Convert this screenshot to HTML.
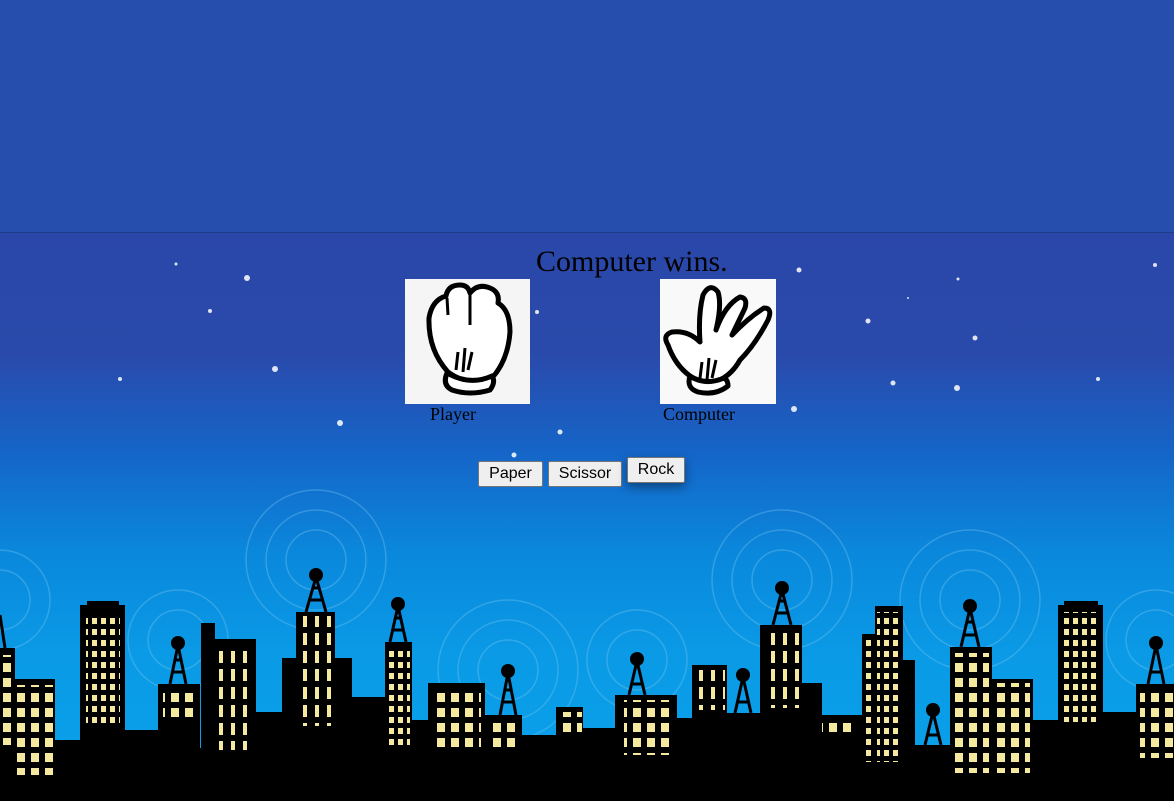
<!DOCTYPE html>
<html><head><style>
html,body{margin:0;padding:0;width:1174px;height:801px;overflow:hidden;font-family:"Liberation Serif",serif}
body{position:relative;background:#264ead}
#bg{position:absolute;left:0;top:232px;width:1174px;height:569px;background:linear-gradient(#2a47a9 0px,#2a4aab 120px,#1565c8 220px,#0a88dc 320px,#0a9ae6 420px,#0aa2ea 569px);border-top:1px solid #1f3c8a}
.t{position:absolute;color:#000}
button{position:absolute;font:16px "Liberation Sans",sans-serif;background:#efefef;border:1px solid #767676;border-radius:2px;padding:0;height:26px}
</style></head><body>
<div id="bg"></div>
<svg style="position:absolute;left:0;top:0" width="1174" height="801">
<defs>
<pattern id="w" width="9" height="11" patternUnits="userSpaceOnUse"><rect x="2" y="2" width="5" height="6" fill="#f5e9a0"/></pattern>
<pattern id="w2" width="14" height="15" patternUnits="userSpaceOnUse"><rect x="3" y="3" width="8" height="9" fill="#f5e9a0"/></pattern>
<pattern id="w3" width="12" height="18" patternUnits="userSpaceOnUse"><rect x="3" y="3" width="4" height="12" fill="#f5e9a0"/></pattern>
</defs>
<g fill="none" stroke="#7cc8f0" stroke-opacity=".35" stroke-width="1.5">
<circle cx="316" cy="560" r="30"/><circle cx="316" cy="560" r="50"/><circle cx="316" cy="560" r="70"/>
<circle cx="782" cy="580" r="30"/><circle cx="782" cy="580" r="50"/><circle cx="782" cy="580" r="70"/>
<circle cx="970" cy="600" r="30"/><circle cx="970" cy="600" r="50"/><circle cx="970" cy="600" r="70"/>
<circle cx="178" cy="640" r="30"/><circle cx="178" cy="640" r="50"/>
<circle cx="508" cy="670" r="30"/><circle cx="508" cy="670" r="50"/><circle cx="508" cy="670" r="70"/>
<circle cx="0" cy="600" r="30"/><circle cx="0" cy="600" r="50"/>
<circle cx="1156" cy="640" r="30"/><circle cx="1156" cy="640" r="50"/>
<circle cx="637" cy="660" r="30"/><circle cx="637" cy="660" r="50"/>
</g>
<g fill="#fff" opacity=".85">
<circle cx="247" cy="278" r="3"/><circle cx="176" cy="264" r="1.5"/><circle cx="210" cy="311" r="2"/><circle cx="275" cy="369" r="3"/><circle cx="120" cy="379" r="2"/><circle cx="340" cy="423" r="3"/><circle cx="560" cy="432" r="2.5"/><circle cx="514" cy="455" r="2.5"/><circle cx="537" cy="312" r="2"/><circle cx="799" cy="270" r="2.5"/><circle cx="868" cy="321" r="2.5"/><circle cx="958" cy="279" r="1.5"/><circle cx="975" cy="338" r="2.5"/><circle cx="893" cy="383" r="2.5"/><circle cx="957" cy="388" r="3"/><circle cx="1098" cy="379" r="2"/><circle cx="1155" cy="265" r="2"/><circle cx="794" cy="409" r="3"/><circle cx="908" cy="298" r="1"/>
</g>
<g fill="#000">
<rect x="0" y="748" width="1174" height="53"/>
<rect x="0" y="648" width="15" height="110"/><rect x="15" y="679" width="40" height="80"/>
<rect x="55" y="740" width="30" height="20"/>
<rect x="80" y="605" width="45" height="150"/><rect x="87" y="601" width="32" height="6"/>
<rect x="125" y="730" width="35" height="30"/>
<rect x="158" y="684" width="42" height="70"/><rect x="201" y="623" width="14" height="130"/><rect x="215" y="639" width="41" height="115"/>
<rect x="256" y="712" width="30" height="40"/>
<rect x="282" y="658" width="70" height="95"/><rect x="296" y="612" width="39" height="140"/>
<rect x="352" y="697" width="33" height="55"/><rect x="385" y="642" width="27" height="110"/>
<rect x="412" y="720" width="16" height="35"/><rect x="428" y="683" width="57" height="70"/><rect x="485" y="715" width="37" height="40"/>
<rect x="522" y="735" width="34" height="20"/><rect x="556" y="707" width="27" height="45"/><rect x="583" y="728" width="32" height="25"/>
<rect x="615" y="695" width="62" height="60"/><rect x="677" y="718" width="15" height="35"/><rect x="692" y="665" width="35" height="90"/>
<rect x="727" y="713" width="33" height="40"/><rect x="760" y="625" width="42" height="130"/><rect x="802" y="683" width="20" height="70"/>
<rect x="822" y="715" width="40" height="40"/><rect x="862" y="634" width="13" height="120"/><rect x="875" y="606" width="28" height="150"/><rect x="903" y="660" width="12" height="95"/>
<rect x="915" y="745" width="35" height="10"/><rect x="950" y="647" width="42" height="110"/><rect x="992" y="679" width="41" height="80"/>
<rect x="1033" y="720" width="25" height="35"/><rect x="1058" y="605" width="45" height="150"/><rect x="1064" y="601" width="34" height="6"/><rect x="1103" y="712" width="33" height="45"/><rect x="1136" y="684" width="38" height="70"/>
<g stroke="#000" stroke-width="3">
<path d="M316 577 L306 612 M316 577 L326 612 M309 600 H323 M312 588 H320"/>
<path d="M398 606 L390 642 M398 606 L406 642 M392 630 H404 M395 618 H401"/>
<path d="M178 645 L170 684 M178 645 L186 684 M172 672 H184 M175 660 H181"/>
<path d="M508 673 L500 715 M508 673 L516 715 M502 702 H514 M505 690 H511"/>
<path d="M637 661 L629 695 M637 661 L645 695 M631 684 H643"/>
<path d="M743 677 L735 713 M743 677 L751 713 M737 702 H749"/>
<path d="M782 590 L773 625 M782 590 L791 625 M775 613 H789 M779 601 H785"/>
<path d="M970 608 L961 647 M970 608 L979 647 M963 635 H977 M967 622 H973"/>
<path d="M933 712 L925 745 M933 712 L941 745 M927 735 H939"/>
<path d="M1156 645 L1148 684 M1156 645 L1164 684 M1150 672 H1162"/>
<path d="M0 615 L5 648"/>
</g>
<circle cx="316" cy="575" r="7"/><circle cx="398" cy="604" r="7"/><circle cx="178" cy="643" r="7"/><circle cx="508" cy="671" r="7"/><circle cx="637" cy="659" r="7"/><circle cx="743" cy="675" r="7"/><circle cx="782" cy="588" r="7"/><circle cx="970" cy="606" r="7"/><circle cx="933" cy="710" r="7"/><circle cx="1156" cy="643" r="7"/>
</g>
<rect x="0" y="655" width="15" height="90" fill="url(#w2)"/>
<rect x="17" y="685" width="38" height="90" fill="url(#w2)"/>
<rect x="86" y="614" width="34" height="110" fill="url(#w)"/>
<rect x="163" y="688" width="30" height="30" fill="url(#w2)"/>
<rect x="212" y="645" width="40" height="105" fill="url(#w3)"/>
<rect x="302" y="616" width="30" height="110" fill="url(#w3)"/>
<rect x="388" y="648" width="22" height="100" fill="url(#w)"/>
<rect x="436" y="688" width="45" height="60" fill="url(#w2)"/>
<rect x="490" y="720" width="30" height="30" fill="url(#w2)"/>
<rect x="560" y="712" width="22" height="25" fill="url(#w2)"/>
<rect x="624" y="700" width="50" height="55" fill="url(#w2)"/>
<rect x="695" y="670" width="30" height="40" fill="url(#w3)"/>
<rect x="764" y="628" width="36" height="80" fill="url(#w3)"/>
<rect x="822" y="718" width="30" height="15" fill="url(#w2)"/>
<rect x="864" y="640" width="10" height="122" fill="url(#w)"/>
<rect x="877" y="612" width="25" height="150" fill="url(#w)"/>
<rect x="953" y="653" width="36" height="120" fill="url(#w2)"/>
<rect x="995" y="683" width="35" height="90" fill="url(#w2)"/>
<rect x="1062" y="612" width="38" height="110" fill="url(#w)"/>
<rect x="1140" y="688" width="34" height="70" fill="url(#w2)"/>
<!-- player fist -->
<rect x="405" y="279" width="125" height="125" fill="#f5f5f5"/>
<g fill="#fff" stroke="#000" stroke-width="5" stroke-linejoin="round">
<path d="M448 372 Q428 350 429 318 Q432 300 446 296 Q448 285 460 285 Q468 285 470 293 Q478 283 490 288 Q500 292 498 303 Q510 310 510 332 Q508 360 492 378 Q470 388 448 372 Z"/>
<path d="M447 373 Q442 385 452 390 Q470 396 490 390 Q496 382 492 376 Q470 386 447 373 Z"/>
</g>
<g stroke="#000" stroke-width="3" fill="none"><path d="M458 352 L456 370 M465 348 L463 372 M472 352 L468 370 M470 293 L470 325 M447 298 L448 315"/></g>
<!-- computer hand -->
<rect x="660" y="279" width="116" height="125" fill="#f9f9f9"/>
<g fill="#fff" stroke="#000" stroke-width="5" stroke-linejoin="round">
<path d="M690 376 Q675 365 668 345 Q662 335 672 332 Q688 330 700 342 Q698 315 703 295 Q710 282 718 292 Q722 305 716 330 Q725 305 740 297 Q748 298 745 308 L732 335 Q748 318 764 308 Q773 308 768 320 Q755 345 740 360 Q730 378 712 383 Q698 385 690 376 Z"/>
<path d="M690 376 Q686 388 698 392 Q715 396 728 386 Q728 380 724 378 Q705 386 690 376 Z"/>
</g>
<g stroke="#000" stroke-width="3" fill="none"><path d="M702 362 L700 378 M709 358 L707 380 M716 360 L712 378"/></g>
</svg>
<div class="t" style="left:536px;top:245px;font-size:30px">Computer wins.</div>
<div class="t" style="left:430px;top:404px;font-size:18px">Player</div>
<div class="t" style="left:663px;top:404px;font-size:18px">Computer</div>
<button style="left:478px;top:461px;width:65px">Paper</button>
<button style="left:548px;top:461px;width:74px">Scissor</button>
<button style="left:627px;top:457px;width:58px;box-shadow:0 4px 10px rgba(0,0,0,.4)">Rock</button>
</body></html>
